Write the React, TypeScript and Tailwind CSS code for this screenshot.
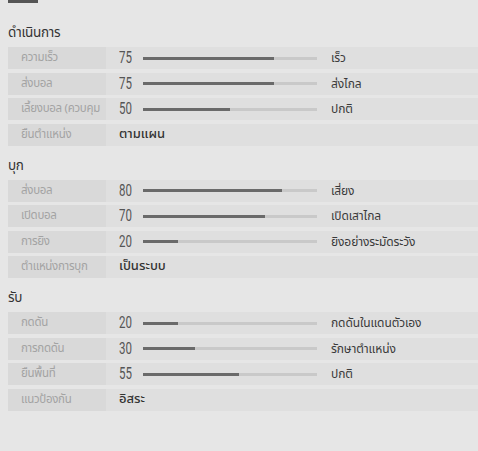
import React from "react";

type Row = { label: string; value?: number; text: string };
type Section = { title: string; rows: Row[] };

const sections: Section[] = [
  {
    title: "ดำเนินการ",
    rows: [
      { label: "ความเร็ว", value: 75, text: "เร็ว" },
      { label: "ส่งบอล", value: 75, text: "ส่งไกล" },
      { label: "เลี้ยงบอล (ควบคุม", value: 50, text: "ปกติ" },
      { label: "ยืนตำแหน่ง", text: "ตามแผน" },
    ],
  },
  {
    title: "บุก",
    rows: [
      { label: "ส่งบอล", value: 80, text: "เสี่ยง" },
      { label: "เปิดบอล", value: 70, text: "เปิดเสาไกล" },
      { label: "การยิง", value: 20, text: "ยิงอย่างระมัดระวัง" },
      { label: "ตำแหน่งการบุก", text: "เป็นระบบ" },
    ],
  },
  {
    title: "รับ",
    rows: [
      { label: "กดดัน", value: 20, text: "กดดันในแดนตัวเอง" },
      { label: "การกดดัน", value: 30, text: "รักษาตำแหน่ง" },
      { label: "ยืนพื้นที่", value: 55, text: "ปกติ" },
      { label: "แนวป้องกัน", text: "อิสระ" },
    ],
  },
];

const thai = { fontFamily: '"Noto Sans Thai", "Noto Sans", "Liberation Sans", sans-serif' };

function RowView({ row }: { row: Row }) {
  return (
    <div className="flex h-[22px] items-center bg-[#dfdfdf]">
      <div className="flex h-full w-[98px] shrink-0 items-center bg-[#d9d9d9] pl-[13px] text-[11.5px] tracking-[-0.3px] text-[#a3a3a3] whitespace-nowrap overflow-hidden">
        {row.label}
      </div>
      {row.value !== undefined ? (
        <div className="flex items-center">
          <span
            className="ml-[13px] inline-block w-[16px] origin-left scale-x-[0.72] text-[16px] leading-none text-[#555]"
            style={{ fontFamily: "Roboto, sans-serif" }}
          >
            {row.value}
          </span>
          <div className="ml-[8px] h-[3px] w-[174px] bg-[#c9c9c9]">
            <div className="h-full bg-[#6a6a6a]" style={{ width: `${row.value}%` }} />
          </div>
          <span className="ml-[14px] text-[12px] tracking-[-0.1px] text-[#3a3a3a] whitespace-nowrap">{row.text}</span>
        </div>
      ) : (
        <span className="ml-[13px] text-[13px] font-medium text-[#333]">{row.text}</span>
      )}
    </div>
  );
}

export default function App() {
  return (
    <div className="h-[451px] w-[478px] overflow-hidden bg-[#e6e6e6] pl-[8px]" style={thai}>
      <div className="h-[3px] w-[30px] bg-[#555]" />
      {sections.map((s, i) => (
        <div key={s.title} className={i === 0 ? "mt-[22px]" : "mt-[12px]"}>
          <div className="h-[22px] text-[13.5px] tracking-[-0.3px] leading-[16px] text-[#333]">{s.title}</div>
          <div className="flex flex-col gap-[3.5px]">
            {s.rows.map((r) => (
              <RowView key={r.label} row={r} />
            ))}
          </div>
        </div>
      ))}
    </div>
  );
}
